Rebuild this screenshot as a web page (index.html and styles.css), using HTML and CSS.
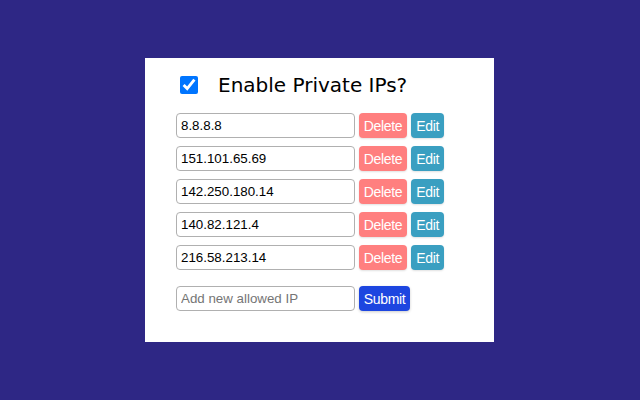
FILE: index.html
```html
<!DOCTYPE html>
<html>
<head>
<meta charset="utf-8">
<link rel="stylesheet" href="styles.css">
</head>
<body>
<div class="card">
  <div class="header">
    <input type="checkbox" class="toggle" checked>
    <span class="title">Enable Private IPs?</span>
  </div>
  <div class="list">
    <div class="row"><input class="ip" type="text" value="8.8.8.8"><button class="btn del">Delete</button><button class="btn edit">Edit</button></div>
    <div class="row"><input class="ip" type="text" value="151.101.65.69"><button class="btn del">Delete</button><button class="btn edit">Edit</button></div>
    <div class="row"><input class="ip" type="text" value="142.250.180.14"><button class="btn del">Delete</button><button class="btn edit">Edit</button></div>
    <div class="row"><input class="ip" type="text" value="140.82.121.4"><button class="btn del">Delete</button><button class="btn edit">Edit</button></div>
    <div class="row"><input class="ip" type="text" value="216.58.213.14"><button class="btn del">Delete</button><button class="btn edit">Edit</button></div>
  </div>
  <div class="row add">
    <input class="ip" type="text" placeholder="Add new allowed IP"><button class="btn submit">Submit</button>
  </div>
</div>
</body>
</html>
```
FILE: styles.css
```css
html, body {
  margin: 0;
  padding: 0;
}
body {
  background: #2e2785;
  width: 640px;
  height: 400px;
  padding-top: 58px;
  box-sizing: border-box;
  font-family: "Liberation Sans", Arial, sans-serif;
}
.card {
  background: #ffffff;
  width: 349px;
  margin-left: 145px;
  box-sizing: border-box;
  padding: 15px 31px 31px 31px;
}
.header {
  display: flex;
  align-items: center;
  height: 24px;
  margin-bottom: 16px;
}
.toggle {
  width: 18px;
  height: 18px;
  margin: 0 0 0 4px;
  accent-color: #0075ff;
}
.title {
  font-family: "DejaVu Sans", Verdana, sans-serif;
  font-size: 20px;
  color: #000;
  margin-left: 20px;
  line-height: 24px;
}
.list {
  display: flex;
  flex-direction: column;
  gap: 8px;
}
.row {
  display: flex;
  gap: 4px;
  height: 25px;
}
.add {
  margin-top: 16px;
}
.ip {
  width: 179px;
  height: 25px;
  box-sizing: border-box;
  border: 1px solid #b0b0b0;
  border-radius: 4px;
  padding: 0 4px;
  margin: 0;
  font-family: "Liberation Sans", Arial, sans-serif;
  font-size: 13.333px;
  color: #000;
  outline: none;
}
.ip::placeholder {
  color: #757575;
}
.btn {
  height: 25px;
  border: none;
  border-radius: 4px;
  padding: 0 4.7px;
  margin: 0;
  font-family: "Liberation Sans", Arial, sans-serif;
  font-size: 14px;
  letter-spacing: -0.3px;
  color: #ffffff;
  cursor: pointer;
}
.del {
  background: #ff7f7f;
  box-shadow: 0 1px 2px rgba(0,0,0,0.12);
}
.edit {
  background: #3a9fc1;
  padding: 0 5.2px;
  box-shadow: 0 1px 2px rgba(0,0,0,0.12);
}
.submit {
  background: #1d46e0;
  box-shadow: 0 1px 3px rgba(0,0,0,0.2);
}
```
